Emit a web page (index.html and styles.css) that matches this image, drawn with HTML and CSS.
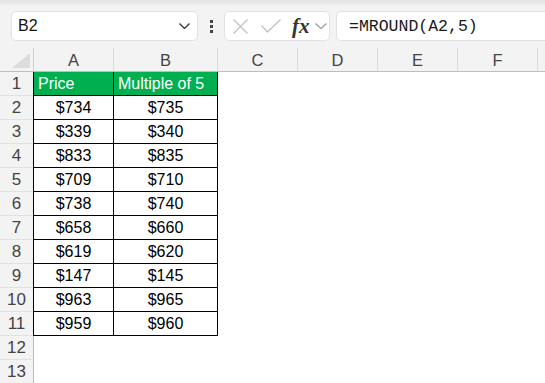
FILE: index.html
```html
<!DOCTYPE html>
<html lang="en">
<head>
  <meta charset="UTF-8" />
  <title>MROUND sheet</title>
  <link rel="stylesheet" href="styles.css">
</head>
<body>
  <div class="ribbon-edge"></div>
  <div class="formula-bar">
    <div class="name-box">
      <span>B2</span>
      <svg class="chev" width="11" height="6" viewBox="0 0 11 6"><path d="M0.5 0.5 L5.5 5.5 L10.5 0.5" fill="none" stroke="#333" stroke-width="1.3"/></svg>
    </div>
    <div class="grip"><i></i><i></i><i></i></div>
    <div class="fx-box">
      <svg width="15" height="15" viewBox="0 0 15 15"><path d="M0.5 0.5 L14.5 14.5 M14.5 0.5 L0.5 14.5" stroke="#c2c2c2" stroke-width="1.3"/></svg>
      <svg width="20" height="14" viewBox="0 0 20 14"><path d="M0.5 6.5 L6.5 13 L19.5 0.5" fill="none" stroke="#c2c2c2" stroke-width="1.3"/></svg>
      <span class="fx">fx</span>
      <svg width="12" height="6" viewBox="0 0 12 6"><path d="M0.5 0.5 L6 5.5 L11.5 0.5" fill="none" stroke="#9a9a9a" stroke-width="1.2"/></svg>
    </div>
    <div class="formula">=MROUND(A2,5)</div>
  </div>

  <div class="sheet" id="sheet">
    <div class="corner"><svg width="18" height="15" viewBox="0 0 18 15"><path d="M18 0 L18 15 L0 15 Z" fill="#dcdcdc"/></svg></div>
    <div class="col-head">A</div>
    <div class="col-head">B</div>
    <div class="col-head">C</div>
    <div class="col-head">D</div>
    <div class="col-head">E</div>
    <div class="col-head">F</div>
    <div class="col-head last"></div>
  </div>

  <script>
    const rows = [
      ["$734", "$735"], ["$339", "$340"], ["$833", "$835"], ["$709", "$710"],
      ["$738", "$740"], ["$658", "$660"], ["$619", "$620"], ["$147", "$145"],
      ["$963", "$965"], ["$959", "$960"]
    ];
    const sheet = document.getElementById("sheet");
    let html = "";
    for (let r = 1; r <= 13; r++) {
      html += `<div class="row-head">${r}</div>`;
      if (r === 1) {
        html += `<div class="cell data title first">Price</div><div class="cell data title">Multiple of 5</div>`;
      } else if (r <= 11) {
        const d = rows[r - 2];
        html += `<div class="cell data first">${d[0]}</div><div class="cell data">${d[1]}</div>`;
      } else {
        html += `<div class="cell"></div><div class="cell"></div>`;
      }
      html += `<div class="cell"></div>`.repeat(5);
    }
    sheet.insertAdjacentHTML("beforeend", html);
  </script>
</body>
</html>
```

FILE: styles.css
```css
body {
  margin: 0;
  background-color: #f3f3f3;
  font-family: 'Liberation Sans', Arial, sans-serif;
  color: #000;
  overflow: hidden;
}
.ribbon-edge {
  height: 5px;
  background: linear-gradient(#e4e4e4 0, #e6e6e6 3px, #f3f3f3 5px);
}
.formula-bar {
  display: flex;
  align-items: center;
  height: 30px;
  padding: 6px 0 0 11px;
}
.name-box, .fx-box, .formula {
  height: 30px;
  box-sizing: border-box;
  background: #fff;
  border: 1px solid #e2e2e2;
  border-radius: 5px;
  display: flex;
  align-items: center;
}
.name-box {
  width: 187px;
  padding: 0 7px 0 6px;
  justify-content: space-between;
  font-size: 16px;
  color: #111;
}
.grip {
  width: 26px;
  display: flex;
  flex-direction: column;
  align-items: center;
  gap: 2px;
}
.grip i {
  width: 3px;
  height: 3px;
  background: #444;
}
.fx-box {
  width: 106px;
  padding: 0 0 0 8px;
}
.fx-box svg:nth-child(2) { margin-left: 13px; }
.fx-box svg:last-child { margin-left: 5px; }
.fx {
  font-family: 'Liberation Serif', 'Times New Roman', serif;
  font-style: italic;
  font-weight: bold;
  font-size: 21px;
  color: #333;
  margin-left: 11px;
}
.formula {
  flex: 1;
  margin-left: 6px;
  border-right: none;
  border-radius: 5px 0 0 5px;
  padding-left: 12px;
  font-family: 'Liberation Mono', 'Courier New', monospace;
  font-size: 16.5px;
  color: #1a1a1a;
}
.sheet {
  margin-top: 7px;
  display: grid;
  grid-template-columns: 34px 80px 104px 80px 80px 80px 80px 1fr;
  grid-auto-rows: 24px;
}
.corner {
  background: #f3f3f3;
  border-right: 1px solid #cfcfcf;
  border-bottom: 1px solid #bdbdbd;
  display: flex;
  align-items: flex-end;
  justify-content: flex-end;
  padding: 0 3px 3px 0;
  box-sizing: border-box;
}
.col-head {
  background: #f3f3f3;
  border-right: 1px solid #dadada;
  border-bottom: 1px solid #bdbdbd;
  box-sizing: border-box;
  display: flex;
  align-items: center;
  justify-content: center;
  font-size: 16.5px;
  color: #444;
  padding-top: 2px;
}
.col-head.last { border-right: none; }
.row-head {
  background: #f3f3f3;
  border-right: 1px solid #bdbdbd;
  border-bottom: 1px solid #e1e1e1;
  box-sizing: border-box;
  display: flex;
  align-items: center;
  justify-content: center;
  font-size: 17px;
  color: #444;
}
.cell {
  background: #fff;
  box-sizing: border-box;
}
.cell.data {
  border-right: 1px solid #000;
  border-bottom: 1px solid #000;
  display: flex;
  align-items: center;
  justify-content: center;
  font-size: 16px;
}
.cell.data.first { box-shadow: -1px 0 0 #000; }
.cell.title {
  background: #00b050;
  color: #fff;
  justify-content: flex-start;
  padding-left: 4px;
}
```
